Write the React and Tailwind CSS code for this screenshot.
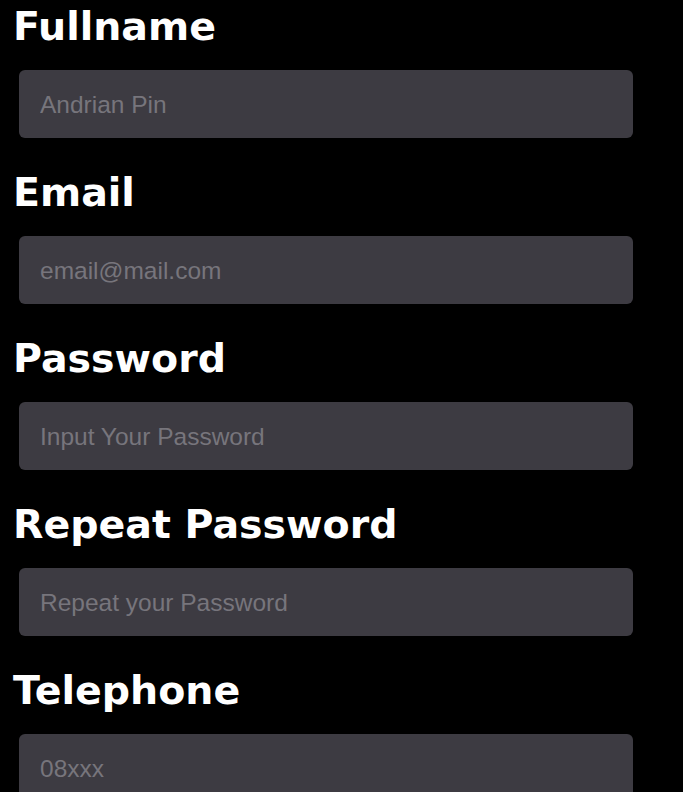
import React from 'react';

const fields = [
  { label: 'Fullname', type: 'text', placeholder: 'Andrian Pin' },
  { label: 'Email', type: 'email', placeholder: 'email@mail.com' },
  { label: 'Password', type: 'password', placeholder: 'Input Your Password' },
  { label: 'Repeat Password', type: 'password', placeholder: 'Repeat your Password' },
  { label: 'Telephone', type: 'tel', placeholder: '08xxx' },
];

const App = () => {
  return (
    <div className="min-h-screen bg-black px-[13px] pt-[4px]">
      <form className="flex flex-col gap-[32px]">
        {fields.map((field) => (
          <div key={field.label} className="flex flex-col gap-[22px]">
            <label
              className="text-[39.5px] font-bold leading-[44px] text-white"
              style={{ fontFamily: '"DejaVu Sans", sans-serif' }}
            >
              {field.label}
            </label>
            <input
              type={field.type}
              placeholder={field.placeholder}
              className="ml-[6px] h-[68px] w-[614px] rounded-[6px] bg-[#3d3b42] px-[21px] pt-[2px] text-[24.5px] text-white outline-none placeholder:text-[#77757c]"
              style={{ fontFamily: '"Liberation Sans", Arial, sans-serif' }}
            />
          </div>
        ))}
      </form>
    </div>
  );
};

export default App;
